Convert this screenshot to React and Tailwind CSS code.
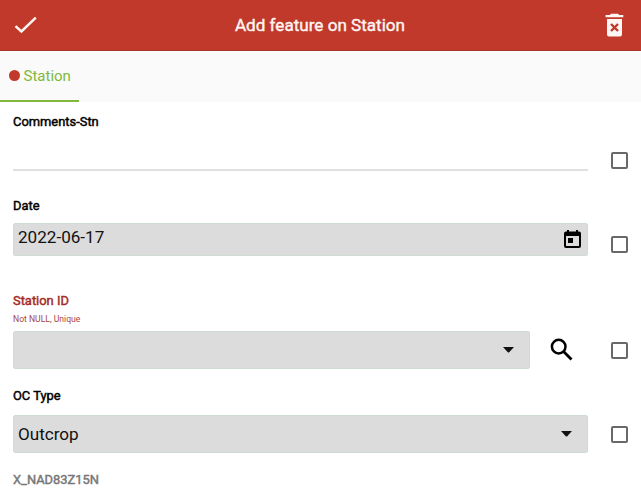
const strong = '[-webkit-text-stroke:0.45px_currentColor]';

function Checkbox() {
  return <span role="checkbox" aria-checked="false" className="block h-[17px] w-[17px] shrink-0 rounded-[2px] border-2 border-[#696969] bg-white" />;
}

function Label({ children, className = 'text-black' }) {
  return <div className={`h-5 whitespace-nowrap pt-px text-[12.9px] leading-5 ${strong} ${className}`}>{children}</div>;
}

function Arrow() {
  return (
    <svg className="mr-[15px] h-[6px] w-[11px]" viewBox="0 0 11 6">
      <path d="M0 0h11L6.2 5.2q-.7.7-1.4 0z" fill="#111" />
    </svg>
  );
}

function Select({ value }) {
  return (
    <div className="flex h-[38px] flex-1 items-center justify-between rounded-[2px] border border-[#d0dcd2] bg-[#dcdcdc] pl-[4px]">
      <span className="text-[17.1px] leading-5 text-[#111]">{value}</span>
      <Arrow />
    </div>
  );
}

export default function App() {
  return (
    <div className="flex h-[500px] w-[641px] flex-col overflow-hidden bg-white font-['Roboto',sans-serif]">
      <header className="flex h-[51px] shrink-0 items-center justify-between border-b border-[#a93428] bg-[#c0392b] pr-[17px] pl-[14px]">
        <svg className="h-6 w-6" viewBox="0 0 24 24" fill="none" stroke="#fff3f0" strokeWidth="2.5">
          <path d="M1.5 13.1l5.9 5.4L21.8 4.7" />
        </svg>
        <h1 className="mr-[3px] text-[17.1px] leading-6 text-[#fff5f1] [-webkit-text-stroke:0.4px_currentColor]">Add feature on Station</h1>
        <svg className="h-6 w-[19px]" viewBox="0 0 19 24">
          <path d="M6 .8h7l1.200 1.200H18.300v2.300H.5V2h4.300zM2 6h15v15.600q0 2-2 2H4q-2 0-2-2z" fill="#fff5f2" />
          <path d="M6 11l7 7M13 11l-7 7" stroke="#c0392b" strokeWidth="2.4" />
        </svg>
      </header>
      <nav className="flex h-[51px] shrink-0 bg-[#fafafa]">
        <div className="flex w-[79px] items-center gap-1 border-b-2 border-[#80b93a] pl-[8.5px]">
          <span className="h-[11px] w-[11px] shrink-0 rounded-full bg-[#c0392b]" />
          <span className="pt-px text-[15px] leading-5 text-[#80b93a]">Station</span>
        </div>
      </nav>
      <main className="flex flex-col pr-[13px] pl-[13px]">
        <section className="flex h-[84px] flex-col pt-[9px]">
          <Label>Comments-Stn</Label>
          <div className="mt-[10px] flex h-[38px] items-start justify-between">
            <div className="h-[30px] w-[575px] border-b-2 border-[#dfe1df]" />
            <div className="pt-[11px]"><Checkbox /></div>
          </div>
        </section>
        <section className="flex h-[95px] flex-col pt-[9px]">
          <Label>Date</Label>
          <div className="mt-2 flex h-[33px] items-start justify-between">
            <div className="flex h-[33px] w-[575px] justify-between rounded-[2px] border border-[#d0dcd2] bg-[#dcdcdc] pr-[6px] pl-[4px]">
              <span className="pt-[3px] text-[17.1px] leading-5 text-[#111]">2022-06-17</span>
              <svg className="mt-[6px] h-[18px] w-[17px]" viewBox="0 0 17 18">
                <path fillRule="evenodd" d="M3 0h2v1.5h7V0h2v1.5h1q2 0 2 2V16q0 2-2 2H2q-2 0-2-2V3.5q0-2 2-2h1zM2 6v10h13V6zM4 8h5v5H4z" fill="#000" />
              </svg>
            </div>
            <div className="pt-[13px]"><Checkbox /></div>
          </div>
        </section>
        <section className="flex h-[95px] flex-col pt-[9px]">
          <Label className="text-[#a52a24]">Station ID</Label>
          <div className="mt-[3px] h-3 text-[8.6px] leading-3 text-[#a94440]">Not NULL, Unique</div>
          <div className="mt-[6px] flex items-center justify-between">
            <div className="flex w-[517px]"><Select value="" /></div>
            <svg className="mr-[18px] mb-[2px] h-[23px] w-[23px]" viewBox="0 0 23 23" fill="none" stroke="#000">
              <circle cx="8.7" cy="8.6" r="6.8" strokeWidth="2.5" />
              <path d="M13.3 13.2l8.2 8.2" strokeWidth="2.8" />
            </svg>
            <Checkbox />
          </div>
        </section>
        <section className="flex h-[84px] flex-col pt-[9px]">
          <Label>OC Type</Label>
          <div className="mt-[10px] flex items-center justify-between">
            <div className="flex w-[575px]"><Select value="Outcrop" /></div>
            <Checkbox />
          </div>
        </section>
        <section className="pt-[9px]">
          <Label className="text-[#777]">X_NAD83Z15N</Label>
        </section>
      </main>
    </div>
  );
}
